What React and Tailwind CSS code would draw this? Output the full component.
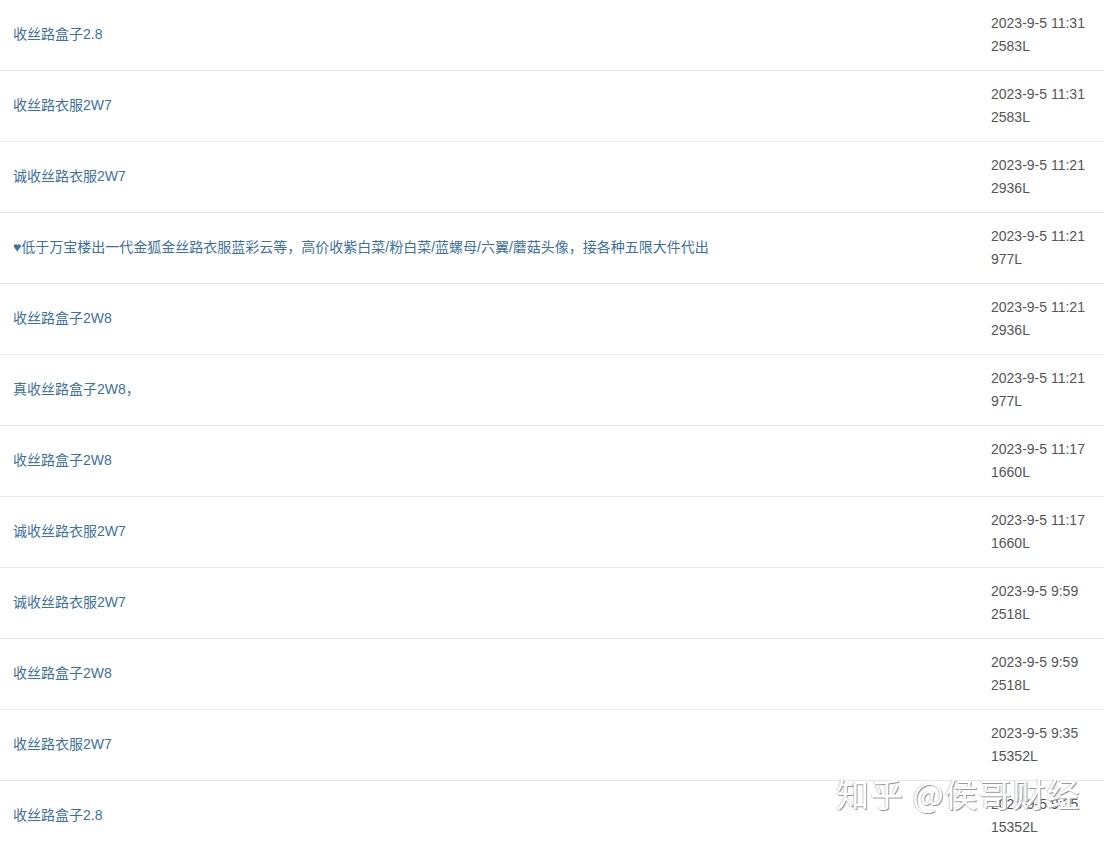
import React from "react";

const rows = [
  { title: "收丝路盒子2.8", time: "2023-9-5 11:31", num: "2583L" },
  { title: "收丝路衣服2W7", time: "2023-9-5 11:31", num: "2583L" },
  { title: "诚收丝路衣服2W7", time: "2023-9-5 11:21", num: "2936L" },
  {
    title:
      "♥低于万宝楼出一代金狐金丝路衣服蓝彩云等，高价收紫白菜/粉白菜/蓝螺母/六翼/蘑菇头像，接各种五限大件代出",
    time: "2023-9-5 11:21",
    num: "977L",
  },
  { title: "收丝路盒子2W8", time: "2023-9-5 11:21", num: "2936L" },
  { title: "真收丝路盒子2W8，", time: "2023-9-5 11:21", num: "977L" },
  { title: "收丝路盒子2W8", time: "2023-9-5 11:17", num: "1660L" },
  { title: "诚收丝路衣服2W7", time: "2023-9-5 11:17", num: "1660L" },
  { title: "诚收丝路衣服2W7", time: "2023-9-5 9:59", num: "2518L" },
  { title: "收丝路盒子2W8", time: "2023-9-5 9:59", num: "2518L" },
  { title: "收丝路衣服2W7", time: "2023-9-5 9:35", num: "15352L" },
  { title: "收丝路盒子2.8", time: "2023-9-5 9:35", num: "15352L" },
];

export default function App() {
  return (
    <div className="relative w-[1104px] h-[843px] overflow-hidden bg-white font-['Liberation_Sans','Noto_Sans_CJK_SC',sans-serif] text-[14px]">
      {rows.map((r, i) => (
        <div
          key={i}
          className="flex items-center justify-between h-[71px] border-b border-[#e6e6e6] pl-[13px]"
        >
          <span className="text-[#41709a] -mt-0.5 cursor-pointer">{r.title}</span>
          <div className="w-[113px] shrink-0 leading-[23px] text-[#555] pb-[1px]">
            <div>{r.time}</div>
            <div>{r.num}</div>
          </div>
        </div>
      ))}

      {/* 水印 */}
      <div className="absolute left-[836px] top-[773px] text-[33px] leading-[40px] tracking-[1px] text-white font-['Noto_Sans_CJK_SC',sans-serif] [text-shadow:1px_1px_0_#9a9a9a,-1px_0_0_#d0d0d0] pointer-events-none whitespace-nowrap">
        知乎 @侯哥财经
      </div>
    </div>
  );
}
